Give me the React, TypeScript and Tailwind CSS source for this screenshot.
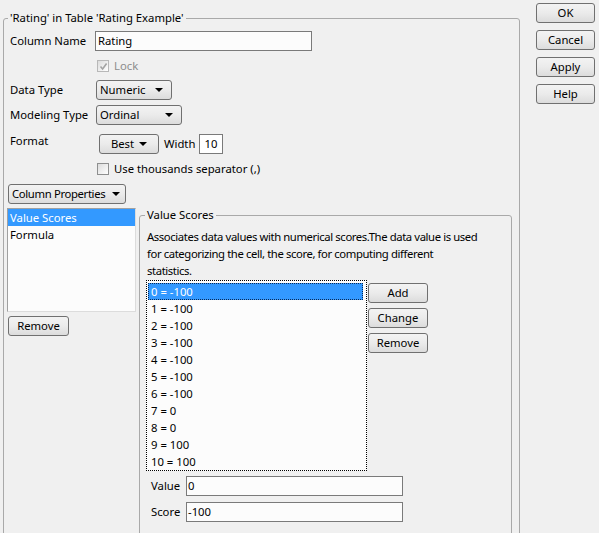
import React from "react";

function Btn({ children, className = "", justify = "justify-center" }: { children: React.ReactNode; className?: string; justify?: string }) {
  return (
    <div
      className={
        "flex items-center h-[20px] border border-[#707070] rounded-[3px] bg-linear-to-b from-[#f3f3f3] via-[#ebebeb] to-[#dcdcdc] leading-none text-black shrink-0 whitespace-nowrap " +
        justify +
        " " +
        className
      }
    >
      {children}
    </div>
  );
}

function Tri() {
  return (
    <svg width="8" height="4" viewBox="0 0 8 4" className="shrink-0">
      <polygon points="0,0 8,0 4,4" fill="#000" />
    </svg>
  );
}

function Dropdown({ label, className = "" }: { label: string; className?: string }) {
  return (
    <Btn justify="justify-between" className={"pl-[3px] pr-[8px] " + className}>
      <span>{label}</span>
      <Tri />
    </Btn>
  );
}

function Check({ checked, disabled }: { checked?: boolean; disabled?: boolean }) {
  return (
    <div
      className={
        "w-[12px] h-[12px] shrink-0 border flex items-center justify-center bg-linear-to-br from-[#dcdcdc] to-[#ffffff] " +
        (disabled ? "border-[#b8b8b8]" : "border-[#8e8f8f]")
      }
    >
      {checked && (
        <svg width="9" height="9" viewBox="0 0 9 9">
          <path d="M1.5 4.5 L3.6 7 L7.6 1.5" stroke={disabled ? "#a3a3a3" : "#333"} strokeWidth="1.6" fill="none" />
        </svg>
      )}
    </div>
  );
}

const scores = [
  "0 = -100",
  "1 = -100",
  "2 = -100",
  "3 = -100",
  "4 = -100",
  "5 = -100",
  "6 = -100",
  "7 = 0",
  "8 = 0",
  "9 = 100",
  "10 = 100",
];

export default function App() {
  return (
    <div className="w-[599px] h-[533px] bg-[#f0f0f0] overflow-hidden flex text-[11.3px] text-black font-['Noto_Sans',sans-serif] leading-[14px]">
      <fieldset className="ml-[3px] mt-[11px] w-[517px] min-w-0 h-[540px] shrink-0 border border-[#a9a9a9] rounded-[3px] px-[6px]">
        <legend className="-ml-[2px] px-[2px] leading-[14px]">'Rating' in Table 'Rating Example'</legend>

        <div className="mt-[6px] flex items-center h-[20px]">
          <span className="w-[85px] shrink-0">Column Name</span>
          <div className="w-[217px] h-[20px] border border-[#7a7a7a] bg-[#fcfcfc] flex items-center pl-[2px]">Rating</div>
        </div>

        <div className="mt-[9px] flex items-center h-[12px] pl-[87px] gap-[5px]">
          <Check checked disabled />
          <span className="text-[#8d8d8d]">Lock</span>
        </div>

        <div className="mt-[8px] flex items-center h-[20px]">
          <span className="w-[86px] shrink-0">Data Type</span>
          <Dropdown label="Numeric" className="w-[76px]" />
        </div>

        <div className="mt-[5px] flex items-center h-[20px]">
          <span className="w-[86px] shrink-0">Modeling Type</span>
          <Dropdown label="Ordinal" className="w-[86px]" />
        </div>

        <div className="mt-[9px] flex h-[20px]">
          <span className="w-[89px] shrink-0 self-start">Format</span>
          <Btn className="w-[60px] gap-[5px]">
            <span>Best</span>
            <Tri />
          </Btn>
          <span className="ml-[5px] w-[35px] self-center">Width</span>
          <div className="w-[24px] h-[20px] border border-[#7a7a7a] bg-white flex items-center justify-center">10</div>
        </div>

        <div className="mt-[9px] flex items-center h-[12px] pl-[87px] gap-[5px]">
          <Check />
          <span>Use thousands separator (,)</span>
        </div>

        <Btn justify="justify-between" className="mt-[9px] -ml-[2px] w-[118px] pl-[3px] pr-[5px]">
          <span className="tracking-[-0.35px]">Column Properties</span>
          <Tri />
        </Btn>

        <div className="mt-[4px] flex items-start">
          <div className="-ml-[3px] w-[129px] shrink-0 flex flex-col">
            <div className="h-[104px] border border-[#a0a0a0] border-r-[#dcdcdc] border-b-[#dcdcdc] bg-[#fcfcfc] flex flex-col">
              <div className="h-[17px] bg-[#3399ff] text-white pl-[2px] flex items-center">Value Scores</div>
              <div className="h-[17px] pl-[2px] flex items-center">Formula</div>
            </div>
            <Btn className="mt-[4px] ml-[1px] w-[61px]">Remove</Btn>
          </div>

          <fieldset className="ml-[3px] mt-0 w-[373px] min-w-0 h-[340px] shrink-0 border border-[#a9a9a9] rounded-[3px] px-[7px]">
            <legend className="-ml-[2px] px-[2px] leading-[14px]">Value Scores</legend>
            <p className="mt-[6px] leading-[17px] whitespace-nowrap tracking-[-0.4px]">
              Associates data values with numerical scores.The data value is used
              <br />
              for categorizing the cell, the score, for computing different
              <br />
              statistics.
            </p>

            <div className="mt-[1px] flex items-start">
              <div className="-ml-[1px] w-[221px] h-[191px] shrink-0 border border-dotted border-black bg-[#fcfcfc] pt-[2px] pl-[1px] pr-[3px] flex flex-col">
                {scores.map((s, i) =>
                  i === 0 ? (
                    <div key={s} className="h-[17px] shrink-0 bg-[#3399ff] text-white border border-dotted border-[#0a2a55] pl-[2px] flex items-center">
                      {s}
                    </div>
                  ) : (
                    <div key={s} className="h-[17px] shrink-0 pl-[3px] flex items-center">
                      {s}
                    </div>
                  )
                )}
              </div>
              <div className="ml-[1px] mt-[3px] flex flex-col gap-[5px]">
                <Btn className="w-[60px]">Add</Btn>
                <Btn className="w-[60px]">Change</Btn>
                <Btn className="w-[60px]">Remove</Btn>
              </div>
            </div>

            <div className="mt-[5px] flex items-center h-[20px] pl-[4px]">
              <span className="w-[35px] shrink-0">Value</span>
              <div className="w-[217px] h-[20px] border border-[#7a7a7a] bg-[#fcfcfc] flex items-center pl-[1px]">0</div>
            </div>
            <div className="mt-[6px] flex items-center h-[20px] pl-[4px]">
              <span className="w-[35px] shrink-0">Score</span>
              <div className="w-[217px] h-[20px] border border-[#7a7a7a] bg-[#fcfcfc] flex items-center pl-[1px]">-100</div>
            </div>
          </fieldset>
        </div>
      </fieldset>

      <div className="ml-[16px] pt-[3px] flex flex-col gap-[7px] w-[59px] shrink-0">
        <Btn>OK</Btn>
        <Btn>Cancel</Btn>
        <Btn>Apply</Btn>
        <Btn>Help</Btn>
      </div>
    </div>
  );
}
